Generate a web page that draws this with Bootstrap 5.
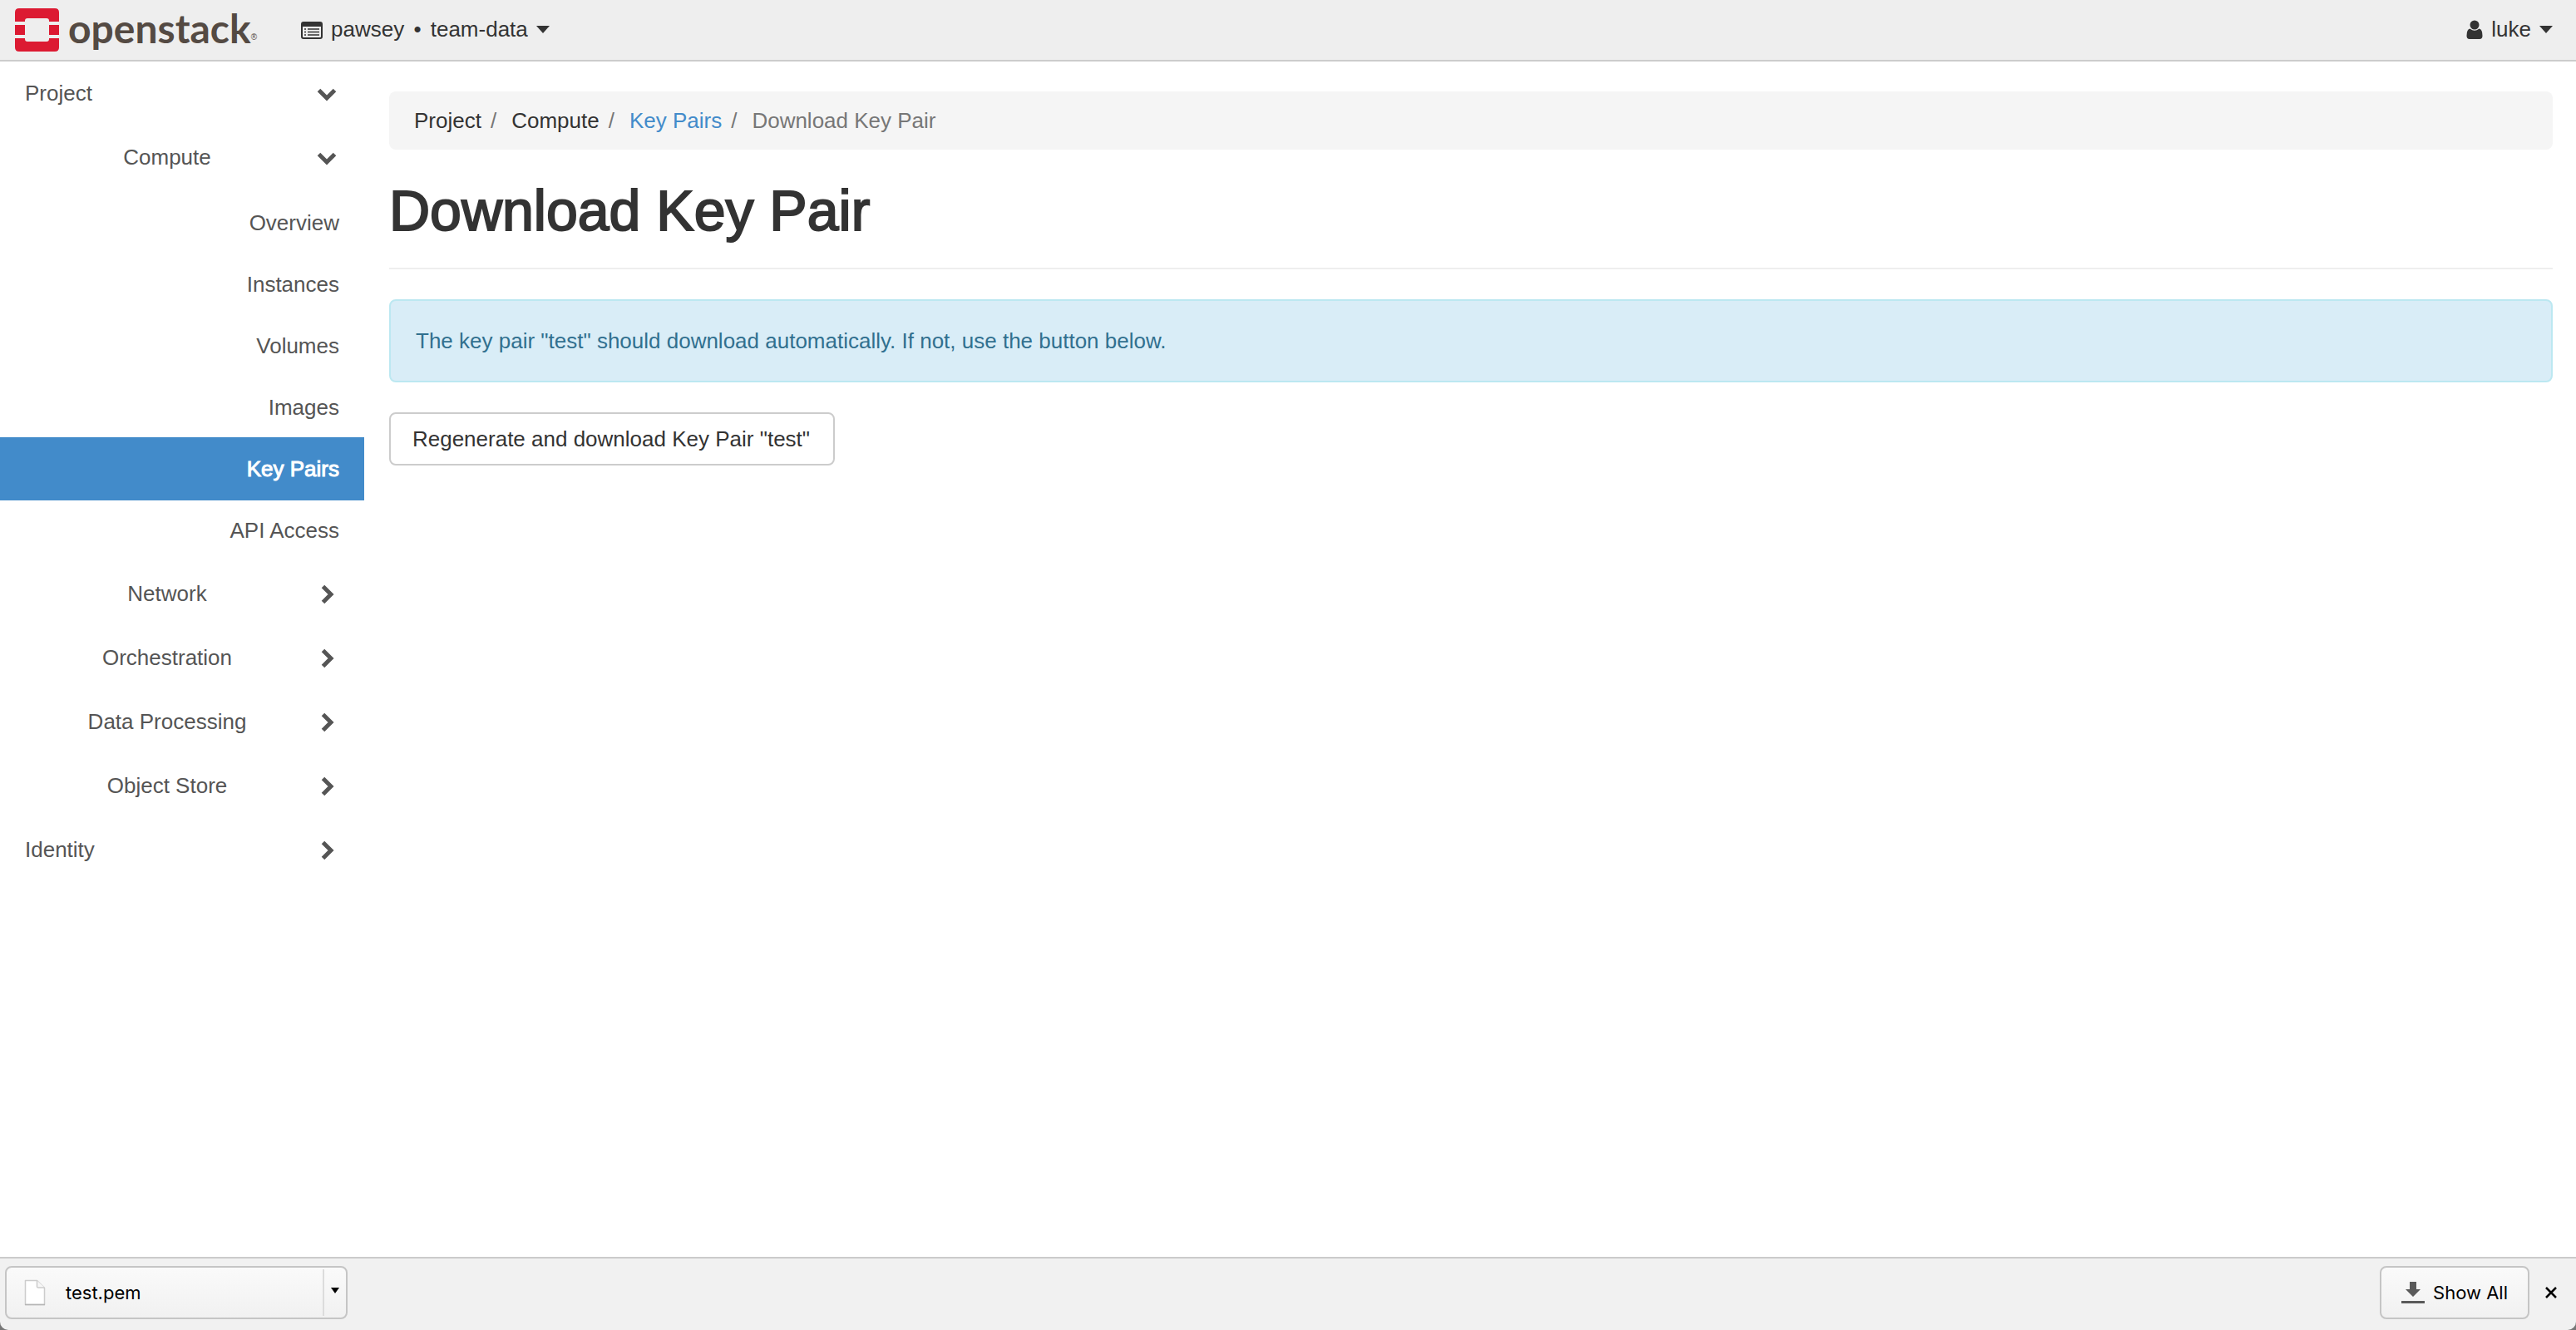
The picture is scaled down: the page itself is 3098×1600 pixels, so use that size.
<!DOCTYPE html>
<html lang="en">
<head>
<meta charset="utf-8">
<meta name="viewport" content="width=device-width, initial-scale=1">
<title>Download Key Pair - OpenStack Dashboard</title>
<link href="https://cdn.jsdelivr.net/npm/bootstrap@5.3.0/dist/css/bootstrap.min.css" rel="stylesheet">
<style>
  body { font-family: "Liberation Sans", Arial, sans-serif; font-size: 26px; line-height: 38px; color: #333; background: #fff; }
  a { text-decoration: none; }
  svg { display: block; flex: none; }
  .topbar { height: 74px; padding: 0 28px 0 18px; background: #eee; border-bottom: 2px solid #ccc; }
  .brand { gap: 10px; width: 344px; color: #544a43; }
  .brand-word { font-family: Lato, sans-serif; font-weight: 700; font-size: 48px; line-height: 52px; padding-bottom: 4px; }
  .brand-reg { font-size: 10px; line-height: 10px; padding-top: 18px; }
  .topbtn { display: flex; align-items: center; gap: 10px; padding: 0; border: 0; background: none; color: #333; line-height: 36px; }
  .topbtn span { padding-bottom: 2px; }
  .side { width: 438px; flex: none; }
  .side a { display: flex; align-items: center; color: #555; padding: 0 30px; }
  .side .group-link { height: 77px; }
  .side .group-link span { padding-bottom: 2px; }
  .side .group-link svg { margin-left: 6px; }
  .leaf-list { padding-top: 2px; }
  .side .leaf-link { height: 76px; justify-content: flex-end; }
  .leaf-list li + li { margin-top: -2px; }
  .side .leaf-link.active { background: #428bca; color: #fff; -webkit-text-stroke: 1px #fff; }
  .content { padding: 36px 28px 0 30px; }
  .crumbs { --bs-breadcrumb-divider-color: #777; --bs-breadcrumb-item-active-color: #777; --bs-breadcrumb-item-padding-x: 11px; padding: 16px 30px; margin: 0; background: #f5f5f5; border-radius: 8px; font-size: 26px; }
  .crumbs a { color: #333; }
  .crumbs a.current { color: #428bca; }
  .crumbs .breadcrumb-item + .breadcrumb-item::before { padding-right: 18px; }
  .title { font-size: 68px; line-height: 74px; font-weight: 400; -webkit-text-stroke: 2px #333; padding: 36px 0 32px; margin: 0 0 36px; border-bottom: 2px solid #eee; }
  .notice { padding: 29px 30px; margin: 0 0 36px; border: 2px solid #bce8f1; border-radius: 8px; background: #d9edf7; color: #31708f; }
  .regen { height: 64px; padding: 0 27px 0 25px; border: 2px solid #ccc; border-radius: 8px; font-size: 26px; line-height: 38px; color: #333; background: #fff; min-width: 536px; }
  .shelf-edge { background: #777; }
  .shelf { height: 88px; padding: 0 20px 4px 6px; border-top: 2px solid #cbcbcb; border-radius: 0 0 10px 10px; background: #f1f1f1; font-family: Inter, sans-serif; font-size: 22px; color: #000; }
  .shelf-box { height: 64px; border: 2px solid #c5c5c5; border-radius: 8px; background: linear-gradient(#fafafa, #f1f1f1); }
  .shelf button { color: #000; }
  .shelf-plain { border: 0; background: none; padding: 0; display: flex; align-items: center; }
  .shelf-file { width: 380px; padding-left: 21px; gap: 24px; }
  .shelf-more { width: 28px; height: 56px; justify-content: center; border-left: 2px solid #dcdcdc; padding-bottom: 6px; }
  .shelf-all { display: flex; align-items: center; gap: 10px; padding: 0 24px; }
</style>
<script src="https://cdn.jsdelivr.net/npm/bootstrap@5.3.0/dist/js/bootstrap.bundle.min.js"></script>
</head>
<body class="d-flex flex-column min-vh-100">

<svg class="d-none" aria-hidden="true">
  <symbol id="i-down" viewBox="0 0 30 30"><path d="M5.500 10.500L15 20L24.500 10.500" fill="none" stroke="currentColor" stroke-width="5"/></symbol>
  <symbol id="i-right" viewBox="0 0 30 30"><path d="M10.500 5.500L20 15L10.500 24.500" fill="none" stroke="currentColor" stroke-width="5"/></symbol>
  <symbol id="i-caret" viewBox="0 0 16 10"><path d="M0 0h16L8 9z" fill="currentColor"/></symbol>
</svg>

<header class="topbar d-flex align-items-center">
  <a class="brand d-flex align-items-center" href="#" aria-label="openstack">
    <svg width="54" height="52" viewBox="0 0 54 52" fill="#dc1a32">
      <path d="M5 0H48Q53 0 53 5V16H41V15Q41 12 38 12H15Q12 12 12 15V16H0V5Q0 0 5 0Z"/>
      <path d="M0 20H12V32H0ZM41 20H53V32H41Z"/>
      <path d="M0 36H12V37Q12 40 15 40H38Q41 40 41 37V36H53V47Q53 52 48 52H5Q0 52 0 47Z"/>
    </svg>
    <span class="d-flex"><span class="brand-word">openstack</span><span class="brand-reg align-self-center">®</span></span>
  </a>
  <button class="topbtn" type="button">
    <svg width="26" height="21" viewBox="0 0 26 21"><rect x="1" y="1" width="24" height="19" rx="2" fill="none" stroke="#333" stroke-width="2"/><path d="M1 1h24v5H1z" fill="#333"/><path d="M4 9h2M4 12.500h2M4 16h2M8 9h14M8 12.500h14M8 16h14" stroke="#333" stroke-width="1.500"/></svg>
    <span>pawsey <span class="px-1">•</span> team-data</span>
    <svg width="16" height="10"><use href="#i-caret"/></svg>
  </button>
  <button class="topbtn ms-auto" type="button">
    <svg width="20" height="24" viewBox="0 0 20 24" fill="#333"><circle cx="10" cy="6" r="5.500"/><path d="M4.500 10.500Q10 15 15.500 10.500Q19.500 11 19.500 19Q19.500 23 16 23H4Q.5 23 .5 19Q.5 11 4.500 10.500Z"/></svg>
    <span>luke</span>
    <svg width="16" height="10"><use href="#i-caret"/></svg>
  </button>
</header>

<div class="d-flex flex-grow-1">
  <nav class="side" aria-label="Dashboard">
    <a class="group-link" href="#"><span class="flex-grow-1">Project</span><svg width="30" height="30"><use href="#i-down"/></svg></a>
    <a class="group-link" href="#"><span class="flex-grow-1 text-center">Compute</span><svg width="30" height="30"><use href="#i-down"/></svg></a>
    <ul class="leaf-list list-unstyled mb-0">
      <li><a class="leaf-link" href="#">Overview</a></li>
      <li><a class="leaf-link" href="#">Instances</a></li>
      <li><a class="leaf-link" href="#">Volumes</a></li>
      <li><a class="leaf-link" href="#">Images</a></li>
      <li><a class="leaf-link active" href="#" aria-current="page">Key Pairs</a></li>
      <li><a class="leaf-link" href="#">API Access</a></li>
    </ul>
    <a class="group-link" href="#"><span class="flex-grow-1 text-center">Network</span><svg width="30" height="30"><use href="#i-right"/></svg></a>
    <a class="group-link" href="#"><span class="flex-grow-1 text-center">Orchestration</span><svg width="30" height="30"><use href="#i-right"/></svg></a>
    <a class="group-link" href="#"><span class="flex-grow-1 text-center">Data Processing</span><svg width="30" height="30"><use href="#i-right"/></svg></a>
    <a class="group-link" href="#"><span class="flex-grow-1 text-center">Object Store</span><svg width="30" height="30"><use href="#i-right"/></svg></a>
    <a class="group-link" href="#"><span class="flex-grow-1">Identity</span><svg width="30" height="30"><use href="#i-right"/></svg></a>
  </nav>

  <main class="content flex-grow-1">
    <ol class="breadcrumb crumbs">
      <li class="breadcrumb-item"><a href="#">Project</a></li>
      <li class="breadcrumb-item"><a href="#">Compute</a></li>
      <li class="breadcrumb-item"><a class="current" href="#">Key Pairs</a></li>
      <li class="breadcrumb-item active">Download Key Pair</li>
    </ol>
    <h1 class="title">Download Key Pair</h1>
    <div class="alert notice" role="alert">The key pair "test" should download automatically. If not, use the button below.</div>
    <button class="btn regen" type="button">Regenerate and download Key Pair "test"</button>
  </main>
</div>

<footer class="shelf-edge">
  <div class="shelf d-flex align-items-center">
    <div class="shelf-box d-flex align-items-center">
      <button class="shelf-plain shelf-file" type="button">
        <svg width="26" height="32" viewBox="0 0 26 32"><path d="M1.500 1.500H15.500L24.500 10.500V30.500H1.500Z" fill="#fff" stroke="#ccc" stroke-width="1.500" stroke-linejoin="round"/><path d="M15.500 1.500V9Q15.500 10 17 10H24.500" fill="#f7f7f7" stroke="#ccc" stroke-width="1.500"/><path d="M1 30.500H25" stroke="#b5b5b5" stroke-width="1.500"/></svg>
        <span>test.pem</span>
      </button>
      <button class="shelf-plain shelf-more" type="button" aria-label="More actions"><svg width="10" height="7" viewBox="0 0 10 7"><path d="M0 0h10L5 7z"/></svg></button>
    </div>
    <button class="shelf-box shelf-all ms-auto" type="button">
      <svg width="28" height="26" viewBox="0 0 28 26" fill="#5a5a5a"><path d="M10 0h8v9h5L14 18 5 9h5zM0 23h28v3H0z"/></svg>
      <span>Show All</span>
    </button>
    <button class="shelf-plain ms-3" type="button" aria-label="Close"><svg width="20" height="16" viewBox="0 0 20 16"><path d="M4 2L16 14M16 2L4 14" stroke="#000" stroke-width="2.500"/></svg></button>
  </div>
</footer>
</body>
</html>
